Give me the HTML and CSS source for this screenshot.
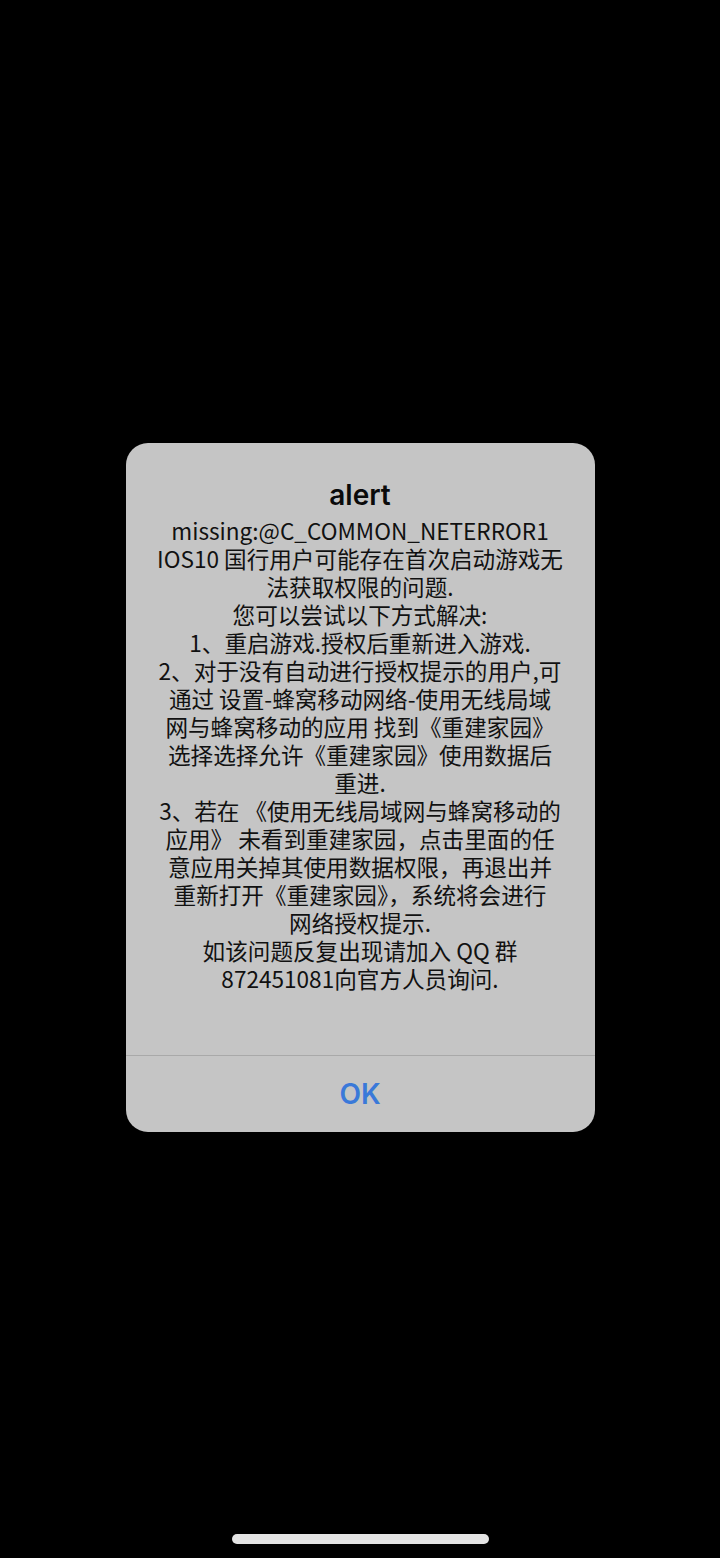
FILE: index.html
```html
<!DOCTYPE html>
<html lang="zh-CN">
<head>
<meta charset="utf-8">
<link rel="stylesheet" href="styles.css">
</head>
<body>
<div class="screen">
  <div class="alert">
    <div class="alert-body">
      <div class="alert-title">alert</div>
      <div class="alert-message">
        <div>missing:@C_COMMON_NETERROR1</div>
        <div>IOS10 国行用户可能存在首次启动游戏无</div>
        <div>法获取权限的问题.</div>
        <div>您可以尝试以下方式解决:</div>
        <div>1、重启游戏.授权后重新进入游戏.</div>
        <div>2、对于没有自动进行授权提示的用户,可</div>
        <div>通过 设置-蜂窝移动网络-使用无线局域</div>
        <div>网与蜂窝移动的应用 找到《重建家园》</div>
        <div>选择选择允许《重建家园》使用数据后</div>
        <div>重进.</div>
        <div>3、若在 《使用无线局域网与蜂窝移动的</div>
        <div>应用》 未看到重建家园，点击里面的任</div>
        <div>意应用关掉其使用数据权限，再退出并</div>
        <div>重新打开《重建家园》，系统将会进行</div>
        <div>网络授权提示.</div>
        <div>如该问题反复出现请加入 QQ 群</div>
        <div>872451081向官方人员询问.</div>
      </div>
    </div>
    <div class="alert-actions">
      <div class="alert-button">OK</div>
    </div>
  </div>
  <div class="home-indicator"></div>
</div>
</body>
</html>
```

FILE: styles.css
```css
html, body {
  margin: 0;
  padding: 0;
  background: #000;
}

.screen {
  width: 720px;
  height: 1558px;
  background: #000;
  display: flex;
  flex-direction: column;
  align-items: center;
  font-family: "Noto Sans CJK SC", "Noto Sans", sans-serif;
}

.alert {
  margin-top: 443px;
  width: 469px;
  background: #c5c5c5;
  border-radius: 22px;
  overflow: hidden;
  display: flex;
  flex-direction: column;
}

.alert-body {
  padding: 34px 12px 62px;
  display: flex;
  flex-direction: column;
  align-items: center;
  text-align: center;
  height: 612px;
  box-sizing: border-box;
}

.alert-title {
  font-family: "Inter", "Noto Sans CJK SC", sans-serif;
  font-weight: 600;
  font-size: 28px;
  line-height: 36px;
  color: #0a0a0a;
  margin-bottom: 4px;
}

.alert-message {
  font-size: 22.6px;
  line-height: 28px;
  color: #111;
  white-space: nowrap;
}

.alert-actions {
  border-top: 1px solid #a9a9a9;
  height: 76px;
  display: flex;
  align-items: center;
  justify-content: center;
}

.alert-button {
  font-family: "Inter", "Noto Sans", sans-serif;
  font-weight: 600;
  font-size: 28px;
  color: #3a79d9;
}

.home-indicator {
  margin-top: 402px;
  width: 257px;
  height: 10px;
  border-radius: 5px;
  background: #e4e4e4;
}
```
